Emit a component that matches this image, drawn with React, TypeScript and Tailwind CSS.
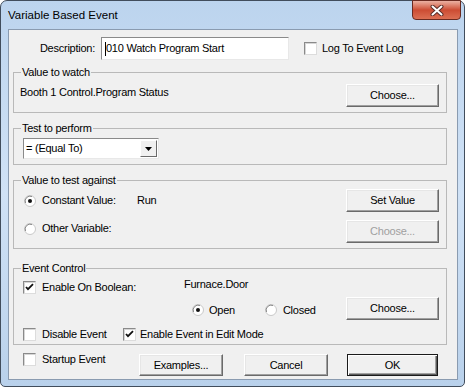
import React from "react"

const font = "font-['Liberation_Sans',Arial,sans-serif] text-[11px] leading-[13px] tracking-[-0.25px]"

function Btn({ label, w, h = 23, disabled = false, isDefault = false }: { label: string; w: number; h?: number; disabled?: boolean; isDefault?: boolean }) {
  const base = isDefault
    ? "border border-[#1a1a1a] shadow-[inset_1px_1px_0_#fff,inset_-1px_-1px_0_#5a5a5a,inset_-2px_-2px_0_#a0a0a0]"
    : "border border-t-white border-l-white border-r-[#6a6a6a] border-b-[#6a6a6a] shadow-[inset_-1px_-1px_0_#a0a0a0,inset_1px_1px_0_#e6e6e6]"
  return (
    <div
      className={`${base} bg-[#f0f0f0] flex items-center justify-center shrink-0 ${disabled ? "text-[#a0a0a0]" : "text-black"}`}
      style={{ width: w, height: h }}
    >
      {label}
    </div>
  )
}

function Check({ on = false }: { on?: boolean }) {
  return (
    <div className="w-[13px] h-[13px] shrink-0 border border-t-[#8a8a8a] border-l-[#8a8a8a] border-r-[#dcdcdc] border-b-[#dcdcdc] bg-white shadow-[inset_1px_1px_0_#d6d6d6] flex items-center justify-center">
      {on && (
        <svg width="9" height="9" viewBox="0 0 9 9">
          <path d="M1 4 L3 6.2 L8 1.2" stroke="#111" strokeWidth="1.8" fill="none" />
        </svg>
      )}
    </div>
  )
}

function Radio({ on = false }: { on?: boolean }) {
  return (
    <svg width="12" height="12" viewBox="0 0 12 12" className="shrink-0">
      <circle cx="6" cy="6" r="5.5" fill="#fff" stroke="#c8c8c8" />
      <path d="M1.5 8 A5 5 0 0 1 8 1.5" stroke="#8a8a8a" fill="none" />
      {on && <circle cx="6" cy="6" r="2" fill="#111" />}
    </svg>
  )
}

function Group({ title, className, children }: { title: string; className: string; children?: React.ReactNode }) {
  return (
    <div className={`relative ml-[4px] w-[434px] border border-[#b9b9b9] ${className}`}>
      <span className="absolute left-[7px] top-[-7px] px-[1px] bg-[#f0f0f0]">{title}</span>
      {children}
    </div>
  )
}

export default function App() {
  return (
    <div className={`w-[465px] h-[387px] rounded-t-[7px] rounded-b-[5px] border border-[#414d5c] bg-gradient-to-b from-[#bcd4ee] via-[#d0e2f6] to-[#b9d1eb] flex flex-col ${font}`}>
      <div className="h-[28px] flex justify-between">
        <div className="pl-[7px] flex items-center text-[11.5px] tracking-normal text-black">Variable Based Event</div>
        <div className="mt-[-1px] mr-[3px] w-[49px] h-[20px] rounded-b-[4px] border border-[#6a2a20] bg-gradient-to-b from-[#eab0a2] via-[#cc4c33] to-[#dc6f53] flex items-center justify-center">
          <svg width="14" height="11" viewBox="0 0 14 11">
            <path d="M2.5 1.5 L11.5 9.5 M11.5 1.5 L2.5 9.5" stroke="#5a2d28" strokeWidth="4" strokeLinecap="round" />
            <path d="M2.5 1.5 L11.5 9.5 M11.5 1.5 L2.5 9.5" stroke="#fff" strokeWidth="2" strokeLinecap="round" />
          </svg>
        </div>
      </div>

      <div className="ml-[7px] w-[450px] h-[351px] border border-[#8a9bb0] bg-[#f0f0f0] flex flex-col">
        <div className="mt-[7px] h-[23px] flex items-center">
          <div className="w-[86px] text-right">Description:</div>
          <div className="ml-[6px] w-[188px] h-[23px] border border-t-[#8a8a8a] border-l-[#8a8a8a] border-r-[#e8e8e8] border-b-[#e8e8e8] bg-white flex items-center pl-[3px]">
            <span className="w-px h-[14px] bg-black" />
            <span>010 Watch Program Start</span>
          </div>
          <div className="ml-[15px]"><Check /></div>
          <span className="ml-[5px]">Log To Event Log</span>
        </div>

        <Group title="Value to watch" className="mt-[12px] h-[41px] flex justify-between items-start pl-[6px] pr-[7px] pt-[11px]">
          <span className="mt-[2px]">Booth 1 Control.Program Status</span>
          <Btn label="Choose..." w={93} />
        </Group>

        <Group title="Test to perform" className="mt-[15px] h-[37px] pl-[9px] pt-[9px]">
          <div className="w-[136px] h-[21px] border border-t-[#8a8a8a] border-l-[#8a8a8a] border-r-[#e8e8e8] border-b-[#e8e8e8] bg-white flex items-center justify-between">
            <span className="pl-[2px]">= (Equal To)</span>
            <div className="w-[17px] h-[17px] mr-px border border-t-white border-l-white border-r-[#6a6a6a] border-b-[#6a6a6a] bg-[#f0f0f0] flex items-center justify-center">
              <svg width="7" height="4" viewBox="0 0 7 4"><path d="M0 0 H7 L3.5 4 Z" fill="#000" /></svg>
            </div>
          </div>
        </Group>

        <Group title="Value to test against" className="mt-[15px] h-[69px] flex flex-col pl-[10px] pr-[7px] pt-[8px]">
          <div className="h-[23px] flex items-center">
            <Radio on />
            <span className="ml-[6px] w-[95px]">Constant Value:</span>
            <span>Run</span>
            <div className="ml-auto"><Btn label="Set Value" w={93} /></div>
          </div>
          <div className="mt-[8px] flex items-start">
            <div className="mt-[2px] flex items-center">
              <Radio />
              <span className="ml-[6px]">Other Variable:</span>
            </div>
            <div className="ml-auto"><Btn label="Choose..." w={93} disabled /></div>
          </div>
        </Group>

        <Group title="Event Control" className="mt-[19px] h-[77px] flex flex-col pl-[9px] pr-[7px] pt-[12px]">
          <div className="h-[13px] flex items-start">
            <Check on />
            <span className="ml-[6px] w-[142px]">Enable On Boolean:</span>
            <span className="mt-[-3px]">Furnace.Door</span>
          </div>
          <div className="mt-[3px] h-[23px] flex items-center">
            <div className="ml-[169px] mt-[3px] flex items-center">
              <Radio on />
              <span className="ml-[5px]">Open</span>
            </div>
            <div className="ml-[30px] mt-[3px] flex items-center">
              <Radio />
              <span className="ml-[6px]">Closed</span>
            </div>
            <div className="ml-auto"><Btn label="Choose..." w={93} /></div>
          </div>
          <div className="mt-[8px] flex items-center">
            <Check />
            <span className="ml-[6px] w-[81px]">Disable Event</span>
            <Check on />
            <span className="ml-[4px]">Enable Event in Edit Mode</span>
          </div>
        </Group>

        <div className="mt-[8px] flex items-start">
          <div className="w-[130px] pl-[14px] flex items-center">
            <Check />
            <span className="ml-[6px]">Startup Event</span>
          </div>
          <div className="mt-[1px] flex">
            <Btn label="Examples..." w={84} h={22} />
            <div className="ml-[21px]"><Btn label="Cancel" w={84} h={22} /></div>
            <div className="ml-[19px]"><Btn label="OK" w={91} h={22} isDefault /></div>
          </div>
        </div>
      </div>
    </div>
  )
}
